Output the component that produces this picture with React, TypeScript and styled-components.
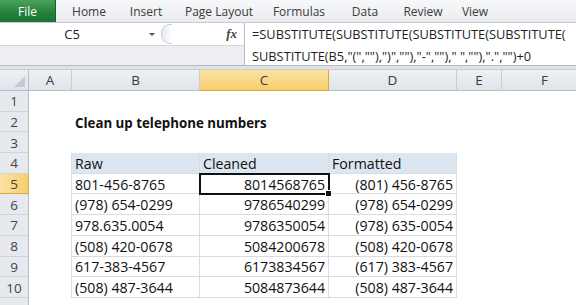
import React from "react";
import styled, { createGlobalStyle, css } from "styled-components";

const GlobalStyle = createGlobalStyle`
  html, body {
    margin: 0;
    padding: 0;
    background: #ffffff;
    overflow: hidden;
  }
`;

const Window = styled.div`
  width: 576px;
  height: 305px;
  overflow: hidden;
  font-family: "Open Sans", "Liberation Sans", sans-serif;
  background: #ffffff;
`;

const Ribbon = styled.div`
  height: 22px;
  display: flex;
  align-items: stretch;
  background: linear-gradient(#f7f8fa, #e9ecf0);
  border-bottom: 1px solid #c4cad2;
`;

const FileTab = styled.div`
  width: 55px;
  display: flex;
  align-items: center;
  justify-content: center;
  color: #ffffff;
  font-size: 12px;
  background: linear-gradient(#4aa35a, #24803a 60%, #1d7232);
  border-right: 1px solid #16602a;
`;

const Tab = styled.div<{ $w: number }>`
  width: ${(p) => p.$w}px;
  display: flex;
  align-items: center;
  justify-content: center;
  color: #3b3b3b;
  font-size: 12px;
`;

const FormulaBar = styled.div`
  display: grid;
  grid-template-columns: 244px 1fr;
  grid-template-rows: 22px 20px;
  border-bottom: 1px solid #b7bec8;
`;

const NameRow = styled.div`
  display: flex;
  align-items: center;
  background: #ffffff;
`;

const NameBox = styled.div`
  width: 144px;
  text-align: center;
  font-size: 13px;
  color: #222;
`;

const DropArrow = styled.div`
  width: 0;
  height: 0;
  border-left: 3px solid transparent;
  border-right: 3px solid transparent;
  border-top: 3px solid #555;
  margin-left: 5px;
`;

const Grip = styled.div`
  width: 10px;
  height: 18px;
  margin-left: 6px;
  border: 1px solid #c9ced6;
  border-right: none;
  border-radius: 9px 0 0 9px;
  background: linear-gradient(90deg, #e6e9ee, #ffffff);
`;

const Fx = styled.div`
  margin-left: auto;
  margin-right: 7px;
  font-family: "Liberation Serif", serif;
  font-style: italic;
  font-weight: bold;
  font-size: 13px;
  color: #444;
`;

const NameFill = styled.div`
  background: #eceef1;
  border-top: 1px solid #d3d7dd;
`;

const FormulaLine = styled.div<{ $second?: boolean }>`
  border-left: 1px solid #b7bec8;
  padding-left: 7px;
  padding-top: ${(p) => (p.$second ? "2px" : "0")};
  font-size: 12.8px;
  color: #1e1e1e;
  white-space: nowrap;
  overflow: hidden;
  display: flex;
  align-items: center;
`;

const Divider = styled.div`
  height: 3px;
  background: #dfe3e8;
  border-bottom: 1px solid #c9ced5;
`;

const Sheet = styled.div`
  display: grid;
  grid-template-columns: 29px 43px 128px 129px 128px 45px 86px;
  grid-template-rows: 21px repeat(11, 20.7px);
`;

const headerLook = css<{ $sel?: boolean }>`
  display: flex;
  align-items: center;
  justify-content: center;
  font-size: 13.5px;
  color: #3a3a3a;
  background: ${(p) =>
    p.$sel
      ? "linear-gradient(#fbe3a4, #f7cf6c)"
      : "linear-gradient(#eef0f3, #e0e4ea)"};
  box-sizing: border-box;
`;

const ColHead = styled.div<{ $sel?: boolean }>`
  ${headerLook};
  border-right: 1px solid ${(p) => (p.$sel ? "#d9a93f" : "#c8ced6")};
  border-bottom: 1px solid ${(p) => (p.$sel ? "#d9a93f" : "#b7bec8")};
`;

const RowHead = styled.div<{ $sel?: boolean }>`
  ${headerLook};
  padding-top: 1px;
  background: ${(p) =>
    p.$sel ? "linear-gradient(90deg, #fbe3a4, #f7cf6c)" : "#e6e9ee"};
  border-right: 1px solid ${(p) => (p.$sel ? "#d9a93f" : "#b7bec8")};
  border-bottom: 1px solid ${(p) => (p.$sel ? "#d9a93f" : "#cfd4db")};
  color: #444;
`;

const Corner = styled.div`
  ${headerLook};
  position: relative;
  border-right: 1px solid #b7bec8;
  border-bottom: 1px solid #b7bec8;
  &::after {
    content: "";
    position: absolute;
    right: 3px;
    bottom: 3px;
    width: 0;
    height: 0;
    border-left: 11px solid transparent;
    border-bottom: 11px solid #c4c9d0;
  }
`;

const Cell = styled.div<{
  $align?: "left" | "right";
  $bold?: boolean;
  $table?: boolean;
  $head?: boolean;
  $active?: boolean;
}>`
  position: relative;
  box-sizing: border-box;
  display: flex;
  align-items: center;
  justify-content: ${(p) => (p.$align === "right" ? "flex-end" : "flex-start")};
  padding: 1px 3px 0;
  font-size: ${(p) => (p.$bold ? "13.3px" : "14.2px")};
  font-weight: ${(p) => (p.$bold ? 700 : 400)};
  color: #111;
  white-space: nowrap;
  overflow: visible;
  background: ${(p) => (p.$head ? "#dce6f1" : "transparent")};
  ${(p) =>
    p.$table &&
    css`
      border-right: 1px solid #d8dde4;
      border-bottom: 1px solid #d8dde4;
    `}
  ${(p) =>
    p.$active &&
    css`
      outline: 2px solid #111;
      outline-offset: -1px;
      z-index: 1;
      &::after {
        content: "";
        position: absolute;
        right: -4px;
        bottom: -4px;
        width: 5px;
        height: 5px;
        background: #111;
        border: 1px solid #fff;
      }
    `}
`;

const TableEdge = styled(Cell)`
  border-right: 1px solid #d8dde4;
`;

const tabs = [
  { label: "Home", w: 66 },
  { label: "Insert", w: 48 },
  { label: "Page Layout", w: 98 },
  { label: "Formulas", w: 62 },
  { label: "Data", w: 70 },
  { label: "Review", w: 46 },
  { label: "View", w: 58 },
];

const rows = [
  ["801-456-8765", "8014568765", "(801) 456-8765"],
  ["(978) 654-0299", "9786540299", "(978) 654-0299"],
  ["978.635.0054", "9786350054", "(978) 635-0054"],
  ["(508) 420-0678", "5084200678", "(508) 420-0678"],
  ["617-383-4567", "6173834567", "(617) 383-4567"],
  ["(508) 487-3644", "5084873644", "(508) 487-3644"],
];

const cols = ["A", "B", "C", "D", "E", "F"];

export default function App() {
  return (
    <Window>
      <GlobalStyle />
      <Ribbon>
        <FileTab>File</FileTab>
        {tabs.map((t) => (
          <Tab key={t.label} $w={t.w}>
            {t.label}
          </Tab>
        ))}
      </Ribbon>
      <FormulaBar>
        <NameRow>
          <NameBox>C5</NameBox>
          <DropArrow />
          <Grip />
          <Fx>fx</Fx>
        </NameRow>
        <FormulaLine>=SUBSTITUTE(SUBSTITUTE(SUBSTITUTE(SUBSTITUTE(</FormulaLine>
        <NameFill />
        <FormulaLine $second>
          {'SUBSTITUTE(B5,"(",""),")",""),"-","")," ",""),".","")+0'}
        </FormulaLine>
      </FormulaBar>
      <Divider />
      <Sheet>
        <Corner />
        {cols.map((c) => (
          <ColHead key={c} $sel={c === "C"}>
            {c}
          </ColHead>
        ))}

        <RowHead>1</RowHead>
        {cols.map((c) => (
          <Cell key={"1" + c} />
        ))}

        <RowHead>2</RowHead>
        <Cell />
        <Cell $bold>Clean up telephone numbers</Cell>
        <Cell />
        <Cell />
        <Cell />
        <Cell />

        <RowHead>3</RowHead>
        {cols.map((c) => (
          <Cell key={"3" + c} />
        ))}

        <RowHead>4</RowHead>
        <TableEdge />
        <Cell $table $head>Raw</Cell>
        <Cell $table $head>Cleaned</Cell>
        <Cell $table $head>Formatted</Cell>
        <Cell />
        <Cell />

        {rows.map((r, i) => (
          <React.Fragment key={r[0]}>
            <RowHead $sel={i === 0}>{i + 5}</RowHead>
            <TableEdge />
            <Cell $table>{r[0]}</Cell>
            <Cell $table $align="right" $active={i === 0}>
              {r[1]}
            </Cell>
            <Cell $table $align="right">
              {r[2]}
            </Cell>
            <Cell />
            <Cell />
          </React.Fragment>
        ))}

        <RowHead />
        {cols.map((c) => (
          <Cell key={"11" + c} />
        ))}
      </Sheet>
    </Window>
  );
}
